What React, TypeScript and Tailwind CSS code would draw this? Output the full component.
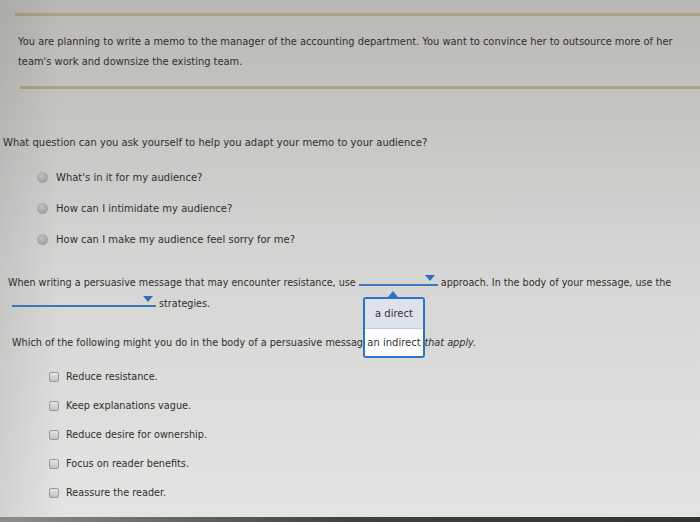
import React from 'react'

const radios = [
  "What's in it for my audience?",
  'How can I intimidate my audience?',
  'How can I make my audience feel sorry for me?',
]

const checks = [
  'Reduce resistance.',
  'Keep explanations vague.',
  'Reduce desire for ownership.',
  'Focus on reader benefits.',
  'Reassure the reader.',
]

const Caret = () => (
  <svg width="10" height="7" viewBox="0 0 10 7" className="absolute right-[3px] top-[3px]">
    <path d="M0 0 H10 L5 6 Z" fill="#2c6fbd" />
  </svg>
)

const Blank: React.FC<{ width: string }> = ({ width }) => (
  <span className={`relative inline-block align-baseline ${width} h-[14px] border-b-2 border-[#3a78bb]`}>
    <Caret />
  </span>
)

export default function App() {
  return (
    <div
      className="relative w-[700px] h-[522px] overflow-hidden text-[10px] text-[#2f2f2f] bg-linear-to-b from-[#b9b8b5] via-[#d5d5d3] to-[#e4e4e3]"
      style={{ fontFamily: '"DejaVu Sans", Verdana, sans-serif' }}
    >
      {/* left-edge shading from the photo */}
      <div className="absolute inset-y-0 left-0 w-[60px] bg-linear-to-r from-[#00000014] to-transparent pointer-events-none" />

      <div className="pt-[13px]">
        <div className="ml-[15px] h-[3px] bg-[#a9a27f]" />

        <p className="pl-[18px] pr-[10px] pt-[16px] leading-[20px] text-[9.9px]">
          You are planning to write a memo to the manager of the accounting department. You want to convince her to outsource more of her
          <br />
          team&apos;s work and downsize the existing team.
        </p>

        <div className="ml-[20px] mt-[14px] h-[3px] bg-[#aaa484]" />

        <p className="pl-[3px] pt-[47px] leading-[14px]">
          What question can you ask yourself to help you adapt your memo to your audience?
        </p>

        <div className="flex flex-col gap-[17px] pl-[37px] pt-[20px]">
          {radios.map((r) => (
            <div key={r} className="flex items-center gap-[8px] h-[14px]">
              <span className="w-[11px] h-[11px] rounded-full bg-[radial-gradient(circle_at_40%_35%,#c4c4c4,#969696)]" />
              <span>{r}</span>
            </div>
          ))}
        </div>

        <div className="pl-[8px] pt-[26px] leading-[20px] text-[9.6px] whitespace-nowrap">
          When writing a persuasive message that may encounter resistance, use{' '}
          <Blank width="w-[79px]" /> approach. In the body of your message, use the
          <br />
          <span className="ml-[4px]"><Blank width="w-[144px]" /></span> strategies.
        </div>

        <p className="pl-[12px] pt-[22px] leading-[14px] text-[9.7px]">
          Which of the following might you do in the body of a persuasive message? <span className="italic">Check all that apply.</span>
        </p>

        <div className="flex flex-col gap-[15px] pl-[49px] pt-[20px] text-[9.7px]">
          {checks.map((c) => (
            <div key={c} className="flex items-center gap-[7px] h-[14px]">
              <span className="w-[10px] h-[10px] rounded-[2px] border border-[#9a9a9a] bg-linear-to-b from-[#e6e6e6] to-[#c4c4c4]" />
              <span>{c}</span>
            </div>
          ))}
        </div>
      </div>

      {/* dropdown list open over the text */}
      <div className="absolute left-[363px] top-[291px] w-[62px]">
        <svg width="10" height="6" viewBox="0 0 10 6" className="ml-[25px] block">
          <path d="M5 0 L10 6 H0 Z" fill="#2c75c6" />
        </svg>
        <div className="rounded-[3px] border-2 border-[#2c75c6] bg-white text-[10px] text-[#333] overflow-hidden">
          <div className="h-[30px] flex items-center justify-center bg-[#dde2ec] border-b border-[#c9cdd6]">a direct</div>
          <div className="h-[27px] flex items-center justify-center">an indirect</div>
        </div>
      </div>

      {/* bottom edge of screen */}
      <div className="absolute left-0 right-0 bottom-0 h-[5px] bg-linear-to-r from-[#8d8f8a] via-[#3d423c] to-[#2f342e]" />
    </div>
  )
}
